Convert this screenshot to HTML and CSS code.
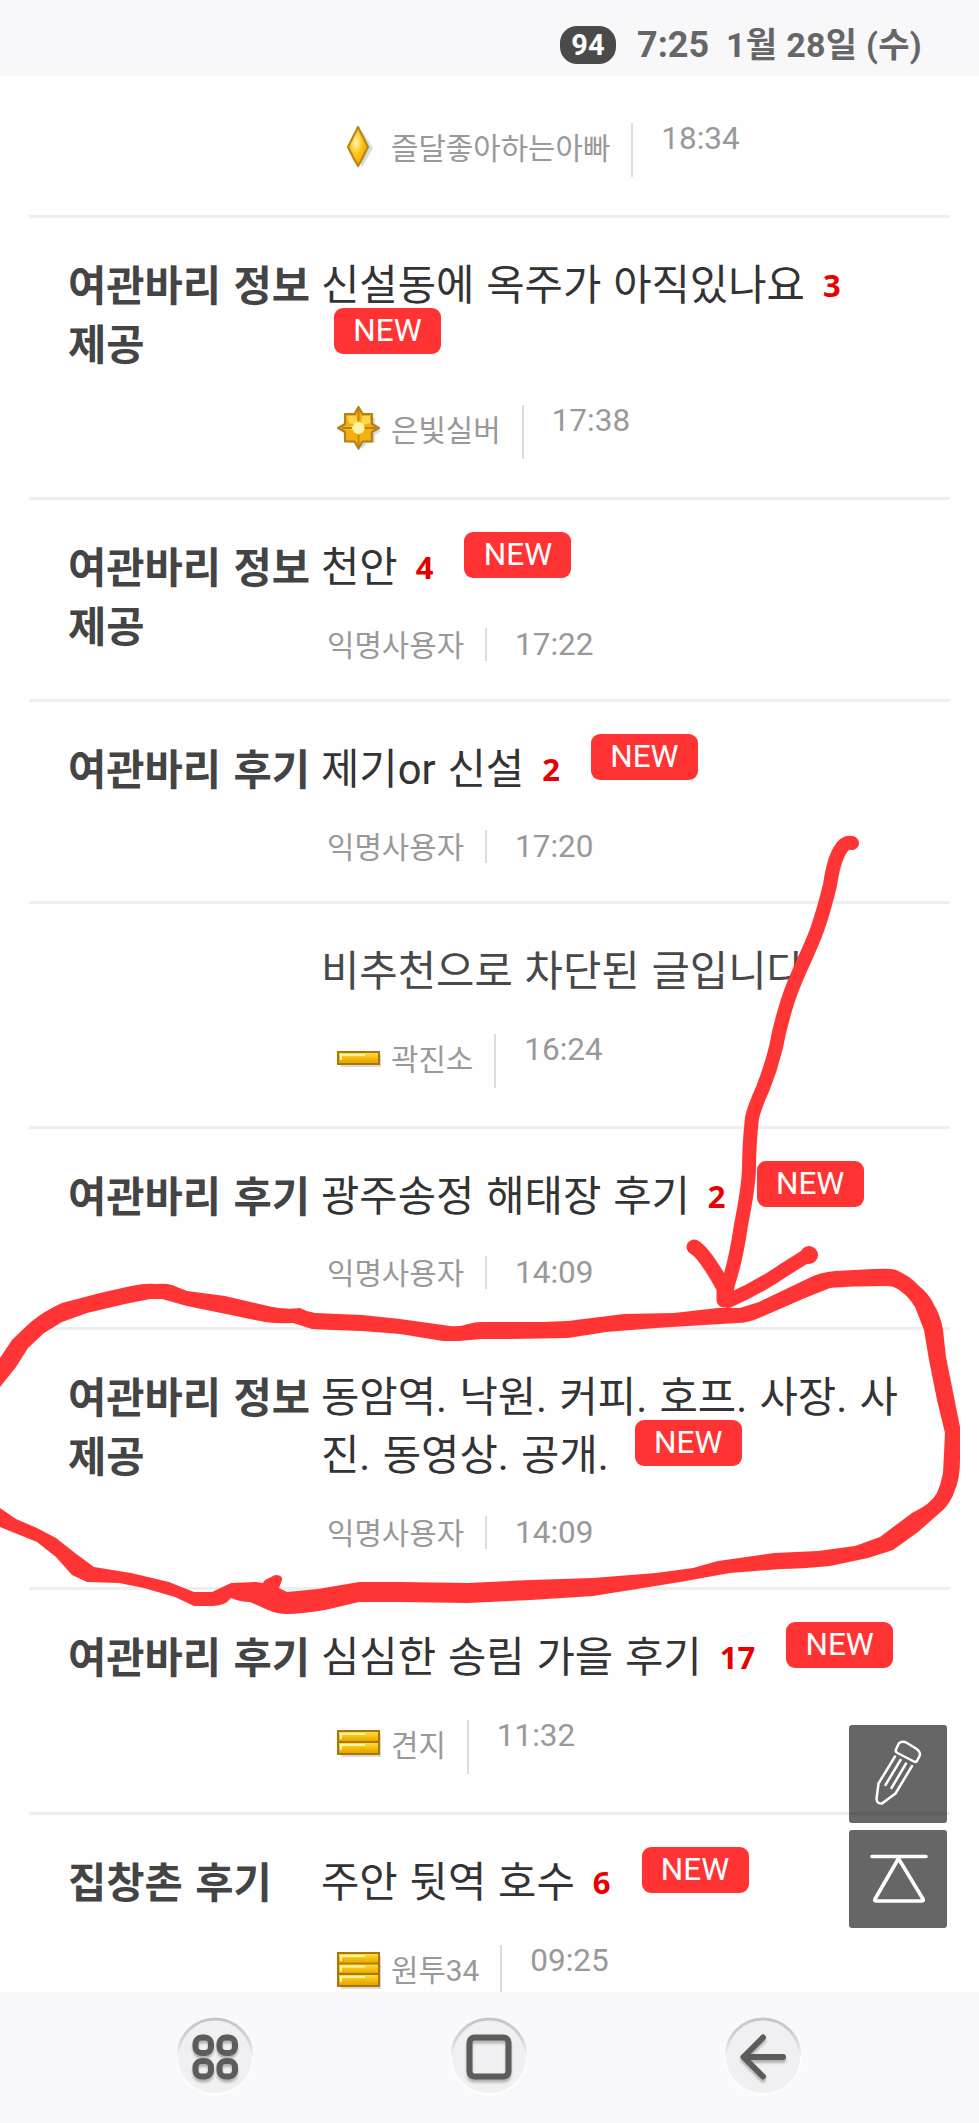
FILE: index.html
```html
<!DOCTYPE html>
<html lang="ko">
<head>
<meta charset="utf-8">
<title>게시판</title>
<link rel="stylesheet" href="styles.css">
</head>
<body>
<svg class="defs" width="0" height="0">
  <defs>
    <linearGradient id="gold" x1="0" y1="0" x2="0" y2="1"><stop offset="0" stop-color="#ffe14d"/><stop offset="0.5" stop-color="#f5bd0c"/><stop offset="1" stop-color="#e09c00"/></linearGradient>
    <linearGradient id="rimfade" x1="0" y1="0" x2="0" y2="1"><stop offset="0" stop-color="#c6c6c8"/><stop offset="0.5" stop-color="#d2d2d4"/><stop offset="1" stop-color="#f4f4f6"/></linearGradient>
    <radialGradient id="shine" cx="0.4" cy="0.4" r="0.6"><stop offset="0" stop-color="#fff6b8"/><stop offset="0.5" stop-color="#ffc61a"/><stop offset="1" stop-color="#f0a000"/></radialGradient>
    <symbol id="bar" viewBox="0 0 46 17"><path d="M4 4h40v12H4z" fill="#999" opacity=".35"/><rect x="1" y="1" width="41" height="12" fill="url(#gold)" stroke="#a87708" stroke-width="2"/><path d="M4 9V4h24" fill="none" stroke="#fff3a6" stroke-width="2"/></symbol>
  </defs>
</svg>
<div class="screen">
  <header class="status"><span class="battery">94</span><span class="clock">7:25</span><span class="date">1월 28일 (수)</span></header>
  <main class="list">
    <article class="row r1"><div class="cat"></div><div class="body"><div></div>
      <div class="meta rank"><svg class="lv" viewBox="0 0 46 46"><path d="M25 8l11 17-11 19-9-19z" fill="#888" opacity=".3"/><path d="M21 4l3 6 3 6 4 8-4 8-3 6-3 5-3-5-3-6-4-8 4-8 3-6z" fill="url(#shine)" stroke="#b58a1c" stroke-width="2.200" stroke-linejoin="round"/></svg><span class="name">즐달좋아하는아빠</span><i class="sep"></i><time>18:34</time></div></div></article>

    <article class="row r2"><div class="cat">여관바리 정보<br>제공</div><div class="body"><div class="title"><div class="line"><span>신설동에 옥주가 아직있나요</span><b class="count">3</b></div><div class="line"><span class="new first">NEW</span></div></div>
      <div class="meta rank"><svg class="lv" viewBox="0 0 46 46"><path d="M25 5l5 8h8v9l6 4-6 4v8h-8l-5 6-5-6h-8v-8l-5-4 5-4v-9h8z" fill="#888" opacity=".3"/><path d="M21.500 2l4 7H35v10l7 4-7 4v9.500H25.500l-4 7-4-7H8V27l-7-4 7-4V9h9.500z" fill="#f5b010" stroke="#b0821a" stroke-width="2.200" stroke-linejoin="round"/><path d="M10 11h9l2 9-9-2zM33 11v7l-9 3 1-10zM6 23l10-2v4z" fill="#ffd84a"/><path d="M21.500 5v11M21.500 30v11M5 23h10M28 23h11" stroke="#b8860b" stroke-width="1.800"/><circle cx="21.500" cy="23" r="6" fill="#fff3b0"/></svg><span class="name">은빛실버</span><i class="sep"></i><time>17:38</time></div></div></article>

    <article class="row r3"><div class="cat">여관바리 정보<br>제공</div><div class="body"><div class="title"><div class="line"><span>천안</span><b class="count">4</b><span class="new">NEW</span></div></div>
      <div class="meta"><span class="name">익명사용자</span><i class="sep"></i><time>17:22</time></div></div></article>

    <article class="row r4"><div class="cat">여관바리 후기</div><div class="body"><div class="title"><div class="line"><span>제기or 신설</span><b class="count">2</b><span class="new">NEW</span></div></div>
      <div class="meta"><span class="name">익명사용자</span><i class="sep"></i><time>17:20</time></div></div></article>

    <article class="row r5"><div class="cat"></div><div class="body"><div class="title"><div class="line blocked"><span>비추천으로 차단된 글입니다</span></div></div>
      <div class="meta rank"><svg class="lv" viewBox="0 0 46 46"><use href="#bar" x="0" y="17" width="46" height="17"/></svg><span class="name">곽진소</span><i class="sep"></i><time>16:24</time></div></div></article>

    <article class="row r6"><div class="cat">여관바리 후기</div><div class="body"><div class="title"><div class="line"><span>광주송정 해태장 후기</span><b class="count">2</b><span class="new">NEW</span></div></div>
      <div class="meta"><span class="name">익명사용자</span><i class="sep"></i><time>14:09</time></div></div></article>

    <article class="row r7"><div class="cat">여관바리 정보<br>제공</div><div class="body"><div class="title"><div class="line"><span>동암역. 낙원. 커피. 호프. 사장. 사</span></div><div class="line last"><span>진. 동영상. 공개.</span><span class="new">NEW</span></div></div>
      <div class="meta"><span class="name">익명사용자</span><i class="sep"></i><time>14:09</time></div></div></article>

    <article class="row r8"><div class="cat">여관바리 후기</div><div class="body"><div class="title"><div class="line"><span>심심한 송림 가을 후기</span><b class="count">17</b><span class="new">NEW</span></div></div>
      <div class="meta rank"><svg class="lv" viewBox="0 0 46 46"><use href="#bar" x="0" y="10" width="46" height="17"/><use href="#bar" x="0" y="21" width="46" height="17"/></svg><span class="name">견지</span><i class="sep"></i><time>11:32</time></div></div></article>

    <article class="row r9"><div class="cat">집창촌 후기</div><div class="body"><div class="title"><div class="line"><span>주안 뒷역 호수</span><b class="count">6</b><span class="new">NEW</span></div></div>
      <div class="meta rank"><svg class="lv" viewBox="0 0 46 46"><use href="#bar" x="0" y="7" width="46" height="17"/><use href="#bar" x="0" y="17.500" width="46" height="17"/><use href="#bar" x="0" y="28" width="46" height="17"/></svg><span class="name">원투34</span><i class="sep"></i><time>09:25</time></div></div></article>
  </main>

  <nav class="keys">
    <svg viewBox="0 0 80 86"><circle cx="40" cy="41" r="38" class="disc"/><path d="M3 41a37 37 0 0 1 74 0" class="rim"/><g class="glyph"><rect x="20.500" y="22.500" width="15.500" height="15.500" rx="6"/><rect x="44.500" y="22.500" width="15.500" height="15.500" rx="6"/><rect x="20.500" y="46" width="15.500" height="15.500" rx="6"/><rect x="44.500" y="46" width="15.500" height="15.500" rx="6"/></g></svg>
    <svg viewBox="0 0 80 86"><circle cx="40" cy="41" r="38" class="disc"/><path d="M3 41a37 37 0 0 1 74 0" class="rim"/><g class="glyph"><rect x="20.500" y="22.500" width="39" height="39" rx="5"/></g></svg>
    <svg viewBox="0 0 80 86"><circle cx="40" cy="41" r="38" class="disc"/><path d="M3 41a37 37 0 0 1 74 0" class="rim"/><g class="glyph"><path d="M40 22.500L20.500 42 40 61.500M20.500 42H60"/></g></svg>
  </nav>

  <div class="tools">
    <button class="tool" aria-label="글쓰기"><svg viewBox="0 0 98 98" fill="none" stroke="#fff" stroke-width="2.500" stroke-linejoin="round" stroke-linecap="round"><path d="M51 17.500Q54 16 58 18L67 23.500Q71 26 71 30L68 36Q67 37.500 65 36.500L48.500 28Q46 26.500 47 24.500L49.500 19Q50 18 51 17.500zM46 31.500L29.500 58.500 27.500 74Q28 79 33 78.500L46.500 68.500 63 41M51.500 35L36.500 60M57 38.500L42.500 63"/></svg></button>
    <button class="tool" aria-label="맨 위로"><svg viewBox="0 0 98 98" fill="none" stroke="#fff" stroke-width="3.600" stroke-linejoin="round" stroke-linecap="round"><path d="M23 26.500H77M49.500 28.500L26 69Q25 71 27 71H73Q75 71 74 69z"/></svg></button>
  </div>

  <svg class="marker" viewBox="0 0 979 2123">
    <path class="ink" fill-rule="evenodd" d="M-5 1370L0 1358 12 1340 Q20 1332 31 1322 Q44 1311 62 1303L100 1293 131 1286Q145 1283 156 1284Q166 1283 172 1285L187 1291 225 1296 268 1306Q284 1310 300 1308Q307 1312 315 1313L362 1315 400 1319 450 1326Q460 1327 468 1324Q475 1322 481 1322H543L568 1321 624 1314 674 1313 718 1308H740L759 1302 807 1279Q820 1272 835 1271L874 1269Q890 1268 896 1270Q910 1276 918 1285Q929 1294 933 1303Q941 1316 943 1330L946 1357 952 1387 960 1427V1460Q960 1478 955 1490Q951 1502 943 1510L918 1532 893 1550 868 1558 830 1566Q800 1569 780 1569L730 1573 680 1582 643 1588 593 1596 531 1600 468 1603 400 1602H359L325 1610 Q300 1614 287 1614Q277 1614 268 1610L250 1602Q240 1602 231 1598Q225 1606 212 1606H194L175 1597 144 1588 119 1583 87 1582 72 1575 56 1557 37 1542 0 1527H-5V1505L0 1508 16 1519 37 1528 56 1538 75 1553 94 1567 131 1573 169 1582 194 1592H212L231 1583 256 1582 263 1583 265 1580 275 1575Q283 1575 282 1580L279 1588 287 1592 318 1589 359 1582H400L468 1583 531 1580 593 1578 656 1573 693 1568 718 1561 774 1553 818 1551 855 1546 880 1537 912 1513Q931 1504 937 1493Q941 1484 943 1473L945 1433 937 1400 929 1360 924 1330 915 1307Q907 1294 896 1288Q892 1286 887 1286Q850 1286 830 1288L805 1298 759 1318Q748 1323 737 1323L656 1328 606 1332 568 1338Q530 1339 481 1339L459 1341H443L400 1334 362 1331Q330 1330 312 1329L293 1323Q279 1324 265 1322L231 1315 187 1306 162 1299H150L125 1304 87 1313 62 1322 44 1333 28 1348 16 1367 0 1387H-5z"/>
    <path class="stroke thin" d="M852 843Q844 841 838 854Q833 864 830 885Q824 910 817 930C812 944 805 958 799 972Q790 992 785 1010Q779 1030 776 1047Q771 1068 763 1088Q754 1108 752 1118Q749 1145 749 1170Q748 1190 741 1225Q736 1260 728 1284L725 1300"/>
    <path class="stroke thick" d="M694 1247Q704 1252 724 1288L724 1300"/>
    <path class="stroke mid" d="M808 1255L784 1270Q758 1288 728 1301"/>
    <circle class="ink" cx="809" cy="1255" r="9"/>
  </svg>
</div>
</body>
</html>
```
FILE: styles.css
```css
* { box-sizing: border-box; }
body { margin: 0; background: #fefefe; font-family: Roboto, "Noto Sans CJK KR", sans-serif; }
.defs { position: absolute; }
.screen { position: relative; width: 979px; height: 2123px; overflow: hidden; display: flex; flex-direction: column; }

.status { height: 76px; flex: none; background: #f8f8fb; display: flex; align-items: center; justify-content: flex-end; padding: 14px 61px 0 0; color: #666; font: 700 34px/50px "Noto Sans", "Noto Sans CJK KR", sans-serif; white-space: nowrap; }
.battery { width: 56px; height: 38px; border-radius: 17px; background: #4a4a4a; color: #fff; font: 700 29px/38px Roboto, sans-serif; text-align: center; }
.clock { width: 73px; margin-left: 21px; font: 700 36px/50px Roboto, sans-serif; }
.date { width: 192px; margin-left: 16px; font-family: Roboto, "Noto Sans CJK KR", sans-serif; letter-spacing: .3px; }

.list { height: 1916px; flex: none; overflow: hidden; padding: 0 29px; }
.row { display: grid; grid-template-columns: 292px 1fr; border-bottom: 3px solid #eee; }
.r1 { height: 142px; } .r2 { height: 282px; } .r3, .r4 { height: 202px; } .r5 { height: 225px; }
.r6 { height: 201px; } .r7 { height: 260px; } .r8, .r9 { height: 225px; }
.cat { padding: 39px 0 0 39px; font-weight: 700; font-size: 41.600px; line-height: 59px; word-spacing: 2px; color: #444; white-space: nowrap; }
.body { display: flex; flex-direction: column; justify-content: space-between; padding: 38px 0; white-space: nowrap; }
.line { display: flex; align-items: flex-start; height: 58px; font-size: 41.700px; line-height: 60px; word-spacing: 1.500px; color: #333; }
.line.last, .r7 .line { word-spacing: 2px; }
.blocked { color: #484848; }
.count { margin-left: 18px; font: 700 31px/58px "Noto Sans", sans-serif; color: #e60000; }
.new { width: 107px; height: 46px; margin: -6px 0 0 31px; border-radius: 9px; background: #ff3333; color: #fff; font-size: 31.500px; line-height: 46px; text-align: center; }
.new.first { margin-left: 13px; }
.last .new { margin-left: 26px; }

.meta { display: flex; align-items: center; height: 33px; padding-left: 6px; font-size: 29.800px; line-height: 33px; color: #999; }
.meta .name { padding-top: 2px; }
.sep { width: 2px; align-self: stretch; margin: 0 28px 0 21px; background: #ddd; }
.meta time { font-size: 31.500px; }
.meta.rank { height: 54px; padding-left: 16px; }
.rank .lv { width: 46px; height: 46px; margin: 0 8px 8px 0; }
.rank .name { padding: 0 0 4px; }
.rank time { padding-bottom: 24px; }

.keys { height: 131px; flex: none; background: #f9f9fb; display: flex; justify-content: space-between; padding: 23px 176px 0 174.500px; }
.keys svg { width: 80px; height: 86px; }
.disc { fill: #f0f0f2; stroke: #fdfdfd; stroke-width: 1.500; }
.rim { fill: none; stroke: url(#rimfade); stroke-width: 3; }
.glyph { fill: none; stroke: #5c5c5c; stroke-width: 6; stroke-linecap: round; stroke-linejoin: round; filter: drop-shadow(0 3px 1px rgba(0,0,0,.25)); }

.tools { position: absolute; left: 849px; top: 1725px; display: flex; flex-direction: column; gap: 7px; }
.tool { width: 98px; height: 98px; padding: 0; border: 0; border-radius: 3px; background: rgba(0,0,0,.6); }
.tool svg { display: block; }
.marker { position: absolute; left: 0; top: 0; width: 979px; height: 2123px; pointer-events: none; }
.ink { fill: #ff3535; }
.stroke { fill: none; stroke: #ff3535; stroke-linecap: round; stroke-linejoin: round; }
.thin { stroke-width: 14px; }
.mid { stroke-width: 14px; }
.thick { stroke-width: 15px; }
```
